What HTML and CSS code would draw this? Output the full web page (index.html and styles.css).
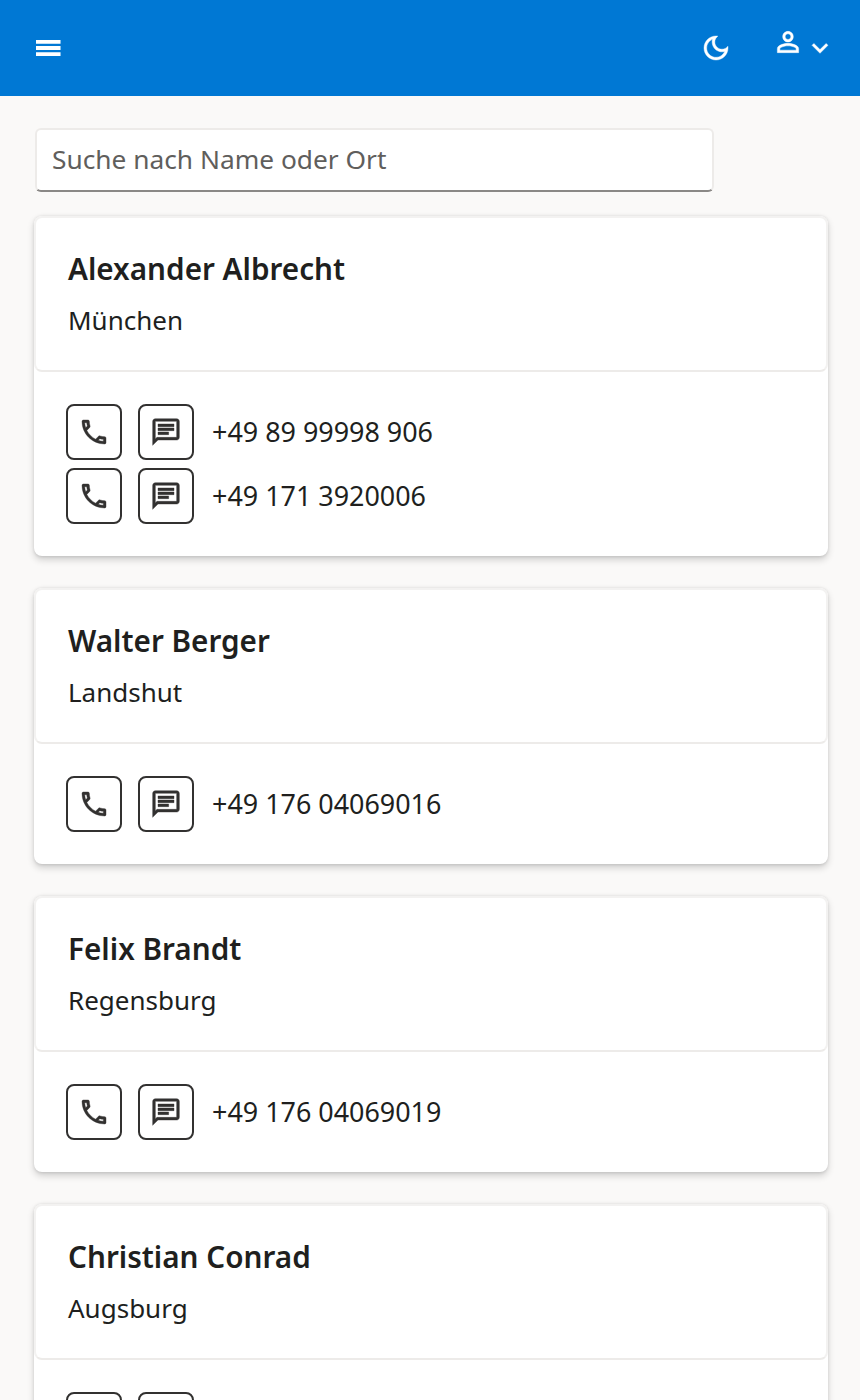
FILE: index.html
```html
<!DOCTYPE html>
<html lang="de">
<head>
<meta charset="utf-8">
<title>Kontakte</title>
<link rel="stylesheet" href="styles.css">
</head>
<body>
<header class="topbar">
  <svg class="icon flat" viewBox="0 0 24 24"><path d="M3 6h18.4v2.9H3zm0 4.55h18.4v2.9H3zm0 4.55h18.4v2.9H3z"/></svg>
  <div class="topbar-actions">
    <svg class="icon moon" viewBox="0 0 24 24"><path d="M9.37 5.51c-.18.64-.27 1.31-.27 1.99 0 4.08 3.32 7.4 7.4 7.4.68 0 1.35-.09 1.99-.27C17.45 17.19 14.93 19 12 19c-3.86 0-7-3.14-7-7 0-2.93 1.81-5.45 4.37-6.49zM12 3c-4.97 0-9 4.03-9 9s4.03 9 9 9 9-4.03 9-9c0-.46-.04-.92-.1-1.36-.98 1.37-2.58 2.26-4.4 2.26-2.98 0-5.4-2.42-5.4-5.4 0-1.81.89-3.42 2.26-4.4-.44-.06-.9-.1-1.36-.1z"/></svg>
    <svg class="icon person" viewBox="0 0 24 24"><path d="M12 5.9c1.16 0 2.1.94 2.1 2.1s-.94 2.1-2.1 2.1S9.9 9.16 9.9 8s.94-2.1 2.1-2.1m0 9c2.97 0 6.1 1.46 6.1 2.1v1.1H5.9V17c0-.64 3.13-2.1 6.1-2.1M12 4C9.79 4 8 5.79 8 8s1.79 4 4 4 4-1.79 4-4-1.79-4-4-4zm0 9c-2.67 0-8 1.34-8 4v3h16v-3c0-2.66-5.33-4-8-4z"/></svg>
    <svg class="icon" viewBox="0 0 24 24"><path d="M16.59 8.59L12 13.17 7.41 8.59 6 10l6 6 6-6z"/></svg>
  </div>
</header>
<main class="content">
  <div class="search"><span class="placeholder">Suche nach Name oder Ort</span></div>

  <section class="card">
    <div class="card-head"><h2 class="name">Alexander Albrecht</h2><p class="place">München</p></div>
    <div class="card-body">
      <div class="row">
        <button class="act"><svg class="icon" viewBox="0 0 24 24"><use href="#call"/></svg></button>
        <button class="act"><svg class="icon" viewBox="0 0 24 24"><use href="#chat"/></svg></button>
        <span class="num">+49 89 99998 906</span>
      </div>
      <div class="row">
        <button class="act"><svg class="icon" viewBox="0 0 24 24"><use href="#call"/></svg></button>
        <button class="act"><svg class="icon" viewBox="0 0 24 24"><use href="#chat"/></svg></button>
        <span class="num">+49 171 3920006</span>
      </div>
    </div>
  </section>

  <section class="card">
    <div class="card-head"><h2 class="name">Walter Berger</h2><p class="place">Landshut</p></div>
    <div class="card-body">
      <div class="row">
        <button class="act"><svg class="icon" viewBox="0 0 24 24"><use href="#call"/></svg></button>
        <button class="act"><svg class="icon" viewBox="0 0 24 24"><use href="#chat"/></svg></button>
        <span class="num">+49 176 04069016</span>
      </div>
    </div>
  </section>

  <section class="card">
    <div class="card-head"><h2 class="name">Felix Brandt</h2><p class="place">Regensburg</p></div>
    <div class="card-body">
      <div class="row">
        <button class="act"><svg class="icon" viewBox="0 0 24 24"><use href="#call"/></svg></button>
        <button class="act"><svg class="icon" viewBox="0 0 24 24"><use href="#chat"/></svg></button>
        <span class="num">+49 176 04069019</span>
      </div>
    </div>
  </section>

  <section class="card">
    <div class="card-head"><h2 class="name">Christian Conrad</h2><p class="place">Augsburg</p></div>
    <div class="card-body">
      <div class="row">
        <button class="act"><svg class="icon" viewBox="0 0 24 24"><use href="#call"/></svg></button>
        <button class="act"><svg class="icon" viewBox="0 0 24 24"><use href="#chat"/></svg></button>
      </div>
    </div>
  </section>
</main>
<svg class="defs" aria-hidden="true">
  <defs>
    <path id="call" d="M6.54 5c.06.89.21 1.76.45 2.59l-1.2 1.2c-.41-1.2-.67-2.47-.76-3.79h1.51m9.86 12.02c.85.24 1.72.39 2.6.45v1.49c-1.32-.09-2.59-.35-3.8-.75l1.2-1.19M7.5 3H4c-.55 0-1 .45-1 1 0 9.39 7.61 17 17 17 .55 0 1-.45 1-1v-3.49c0-.55-.45-1-1-1-1.24 0-2.45-.2-3.57-.57-.1-.04-.21-.05-.31-.05-.26 0-.51.1-.71.29l-2.2 2.2c-2.83-1.45-5.15-3.76-6.59-6.59l2.2-2.2c.28-.28.36-.67.25-1.02C8.7 6.45 8.5 5.25 8.5 4c0-.55-.45-1-1-1z"/>
    <path id="chat" d="M20 2H4c-1.1 0-2 .9-2 2v18l4-4h14c1.1 0 2-.9 2-2V4c0-1.1-.9-2-2-2zm0 14H5.17L4 17.17V4h16v12zM6 12h8v2H6zm0-3h12v2H6zm0-3h12v2H6z"/>
  </defs>
</svg>
</body>
</html>
```

FILE: styles.css
```css
* { box-sizing: border-box; }
html, body { margin: 0; padding: 0; }
body {
  background: #faf9f8;
  color: #201f1e;
  font-family: "Noto Sans", "Open Sans", sans-serif;
  height: 1400px;
  overflow: hidden;
}
.defs { position: absolute; width: 0; height: 0; }
.icon { display: block; width: 32px; height: 32px; fill: currentColor; stroke: currentColor; stroke-width: .3; flex: none; }
.icon.flat { stroke: none; }
.topbar {
  height: 96px;
  background: #0078d4;
  color: #fff;
  display: flex;
  align-items: center;
  justify-content: space-between;
  padding: 0 24px 0 32px;
}
.topbar-actions { display: flex; align-items: flex-start; }
.moon { margin-right: 40px; }
.person { margin-top: -6px; }
.content { padding: 32px 32px 0 34px; }
.search {
  width: 679px;
  height: 64px;
  margin-left: 1px;
  margin-bottom: 24px;
  background: #fff;
  border: 2px solid #edebe9;
  border-bottom-color: #8a8886;
  border-radius: 6px;
  padding: 0 15px 2px;
  display: flex;
  align-items: center;
  font-size: 26.3px;
  color: #605e5c;
}
.card {
  width: 794px;
  margin-bottom: 32px;
  background: #fff;
  border-radius: 8px;
  box-shadow: 0 3.2px 7.2px rgba(0,0,0,.16), 0 .6px 3px rgba(0,0,0,.1);
}
.card-head {
  height: 156px;
  padding: 31px 32px 0;
  border: 2px solid #f3f2f1;
  border-bottom-color: #edebe9;
  border-radius: 8px;
}
.name { margin: 0 0 11px; font-size: 29.7px; line-height: 40px; font-weight: 600; }
.place { margin: 0; font-size: 26px; line-height: 40px; }
.card-body { padding: 32px; display: flex; flex-direction: column; gap: 8px; }
.row { display: flex; align-items: center; gap: 16px; }
.act {
  width: 56px; height: 56px;
  padding: 0;
  background: #fff;
  color: #323130;
  border: 2px solid #323130;
  border-radius: 8px;
  display: flex;
  align-items: center;
  justify-content: center;
}
.num { margin-left: 2px; font-size: 26.9px; line-height: 40px; }
```
